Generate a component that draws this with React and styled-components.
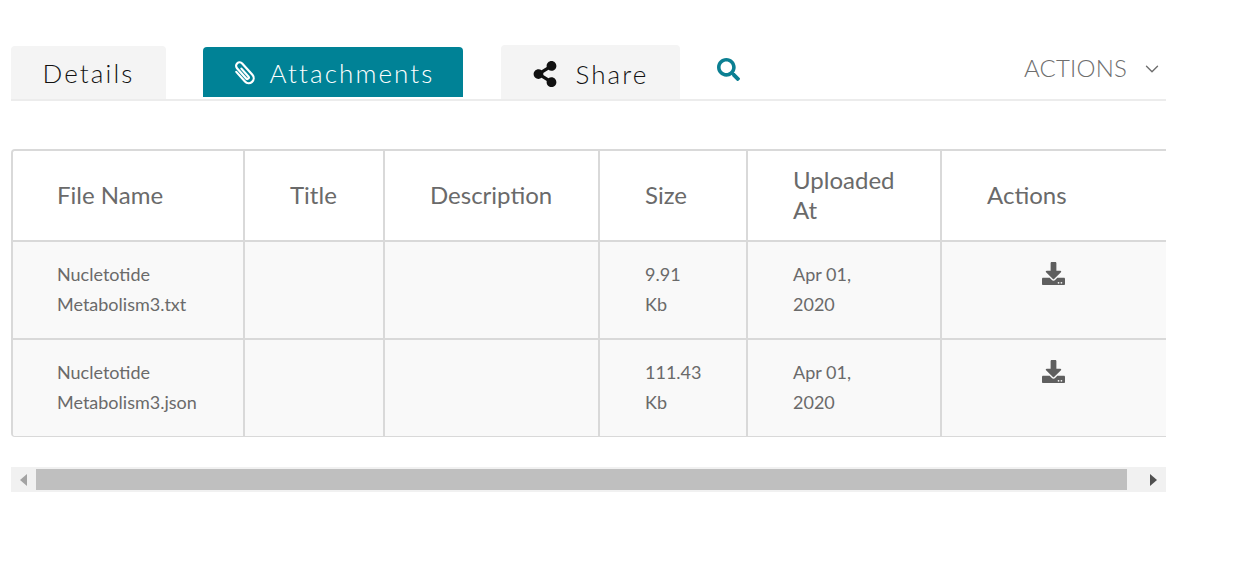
import React from 'react';
import styled, { createGlobalStyle } from 'styled-components';
import { FaShareAlt, FaSearch, FaDownload } from 'react-icons/fa';
import { LuChevronDown } from 'react-icons/lu';

const GlobalStyle = createGlobalStyle`
  html, body {
    margin: 0;
    padding: 0;
    background: #ffffff;
    font-family: Lato, "Open Sans", sans-serif;
  }
  * {
    box-sizing: border-box;
  }
`;

const Page = styled.div`
  width: 1155px;
  margin-left: 11px;
  padding-top: 45px;
`;

const TabBar = styled.div`
  display: flex;
  align-items: flex-end;
  height: 56px;
  border-bottom: 2px solid #ececec;
`;

const Tab = styled.div`
  display: flex;
  align-items: center;
  justify-content: center;
  flex: none;
  width: ${p => p.$width}px;
  height: ${p => p.$height}px;
  margin-left: ${p => p.$left || 0}px;
  margin-bottom: ${p => (p.$active ? 2 : 0)}px;
  padding-top: ${p => p.$pad || 0}px;
  border-radius: 4px 4px 0 0;
  background: ${p => (p.$active ? '#008296' : '#f4f4f4')};
  color: ${p => (p.$active ? '#ffffff' : '#111111')};
  font-size: 26px;
  font-weight: 300;
  letter-spacing: 2.1px;
  white-space: nowrap;

  svg {
    flex: none;
    margin-right: ${p => p.$gap || 15}px;
  }
`;

const ClipIcon = styled.svg`
  width: 24px;
  height: 26px;
  overflow: visible;
  fill: none;
  stroke: currentColor;
  stroke-width: 2.2;
  stroke-linecap: round;
`;

const SearchButton = styled.div`
  display: flex;
  margin-left: 37px;
  margin-bottom: 18px;
  color: #0b7f92;
`;

const ActionsMenu = styled.div`
  display: flex;
  align-items: center;
  margin-left: auto;
  margin-right: 3px;
  margin-bottom: 17px;
  color: #6e6e6e;
  font-size: 24px;
  font-weight: 300;
  letter-spacing: 0.2px;

  svg {
    margin-left: 14px;
    margin-top: 2px;
  }
`;

const TableFrame = styled.div`
  margin-top: 48px;
  overflow: hidden;
  border: solid #d9d9d9;
  border-width: 2px 0 1px 2px;
  border-radius: 4px 0 0 4px;
`;

const Table = styled.table`
  width: 1163px;
  table-layout: fixed;
  border-collapse: separate;
  border-spacing: 0;
  color: #6a6a6a;
`;

const HeadCell = styled.th`
  width: ${p => p.$width}px;
  height: 91px;
  padding: 0 20px 2px 45px;
  border-right: 2px solid #d9d9d9;
  border-bottom: 2px solid #d9d9d9;
  background: #ffffff;
  font-size: 24px;
  font-weight: 400;
  line-height: 30px;
  text-align: left;

  &:first-child {
    padding-left: 44px;
  }

  &:last-child {
    border-right: 0;
  }
`;

const Cell = styled.td`
  height: ${p => (p.$last ? 96 : 98)}px;
  padding: 17px 45px 0 45px;
  border-right: 2px solid #d9d9d9;
  border-bottom: ${p => (p.$last ? 0 : '2px solid #d9d9d9')};
  background: #f9f9f9;
  font-size: 18px;
  line-height: 30px;
  vertical-align: top;

  &:first-child {
    padding-left: 44px;
  }

  &:last-child {
    border-right: 0;
  }
`;

const DownloadCell = styled(Cell)`
  padding: 20px 0 0 100px;
  line-height: 0;
  color: #5f5f5f;
`;

const ScrollBar = styled.div`
  display: flex;
  align-items: center;
  height: 25px;
  margin-top: 30px;
  padding: 2px 0;
  background: #f1f1f1;
`;

const ScrollArrow = styled.div`
  display: flex;
  flex: none;
  align-items: center;
  justify-content: center;
  width: ${p => p.$width}px;
  height: 100%;
  padding-left: ${p => p.$inset || 0}px;

  &::before {
    content: '';
    border-style: solid;
    border-width: 6.5px 0 6.5px 7px;
    border-color: transparent transparent transparent ${p => p.$color};
    transform: ${p => (p.$flip ? 'scaleX(-1)' : 'none')};
  }
`;

const ScrollThumb = styled.div`
  flex: 1;
  height: 100%;
  background: #bfbfbf;
`;

const columns = [
  { label: 'File Name', width: 232 },
  { label: 'Title', width: 140 },
  { label: 'Description', width: 215 },
  { label: 'Size', width: 148 },
  { label: 'Uploaded At', width: 194 },
  { label: 'Actions', width: 234 }
];

const files = [
  { name: 'Nucletotide Metabolism3.txt', size: '9.91 Kb', date: 'Apr 01, 2020' },
  { name: 'Nucletotide Metabolism3.json', size: '111.43 Kb', date: 'Apr 01, 2020' }
];

export default function App() {
  return (
    <Page>
      <GlobalStyle />
      <TabBar>
        <Tab $width={155} $height={53} $pad={1}>Details</Tab>
        <Tab $width={260} $height={50} $left={37} $pad={2} $gap={14} $active>
          <ClipIcon viewBox="0 0 24 26">
            <path
              transform="rotate(-42 12 13)"
              d="M7 7V20a5 5 0 0 0 10 0V4.75a3.5 3.5 0 0 0-7 0V18.5a1.5 1.5 0 0 0 3 0V8"
            />
          </ClipIcon>
          Attachments
        </Tab>
        <Tab $width={179} $height={54} $left={38} $pad={4} $gap={17}>
          <FaShareAlt size={26} />
          Share
        </Tab>
        <SearchButton>
          <FaSearch size={23} />
        </SearchButton>
        <ActionsMenu>
          ACTIONS
          <LuChevronDown size={22} strokeWidth={1.5} />
        </ActionsMenu>
      </TabBar>

      <TableFrame>
        <Table>
          <thead>
            <tr>
              {columns.map(col => (
                <HeadCell key={col.label} $width={col.width}>
                  {col.label}
                </HeadCell>
              ))}
            </tr>
          </thead>
          <tbody>
            {files.map((file, i) => {
              const last = i === files.length - 1;
              return (
                <tr key={file.name}>
                  <Cell $last={last}>{file.name}</Cell>
                  <Cell $last={last} />
                  <Cell $last={last} />
                  <Cell $last={last}>{file.size}</Cell>
                  <Cell $last={last}>{file.date}</Cell>
                  <DownloadCell $last={last}>
                    <FaDownload size={23} />
                  </DownloadCell>
                </tr>
              );
            })}
          </tbody>
        </Table>
      </TableFrame>

      <ScrollBar>
        <ScrollArrow $width={25} $color="#a3a3a3" $flip />
        <ScrollThumb />
        <ScrollArrow $width={39} $color="#505050" $inset={14} />
      </ScrollBar>
    </Page>
  );
}
